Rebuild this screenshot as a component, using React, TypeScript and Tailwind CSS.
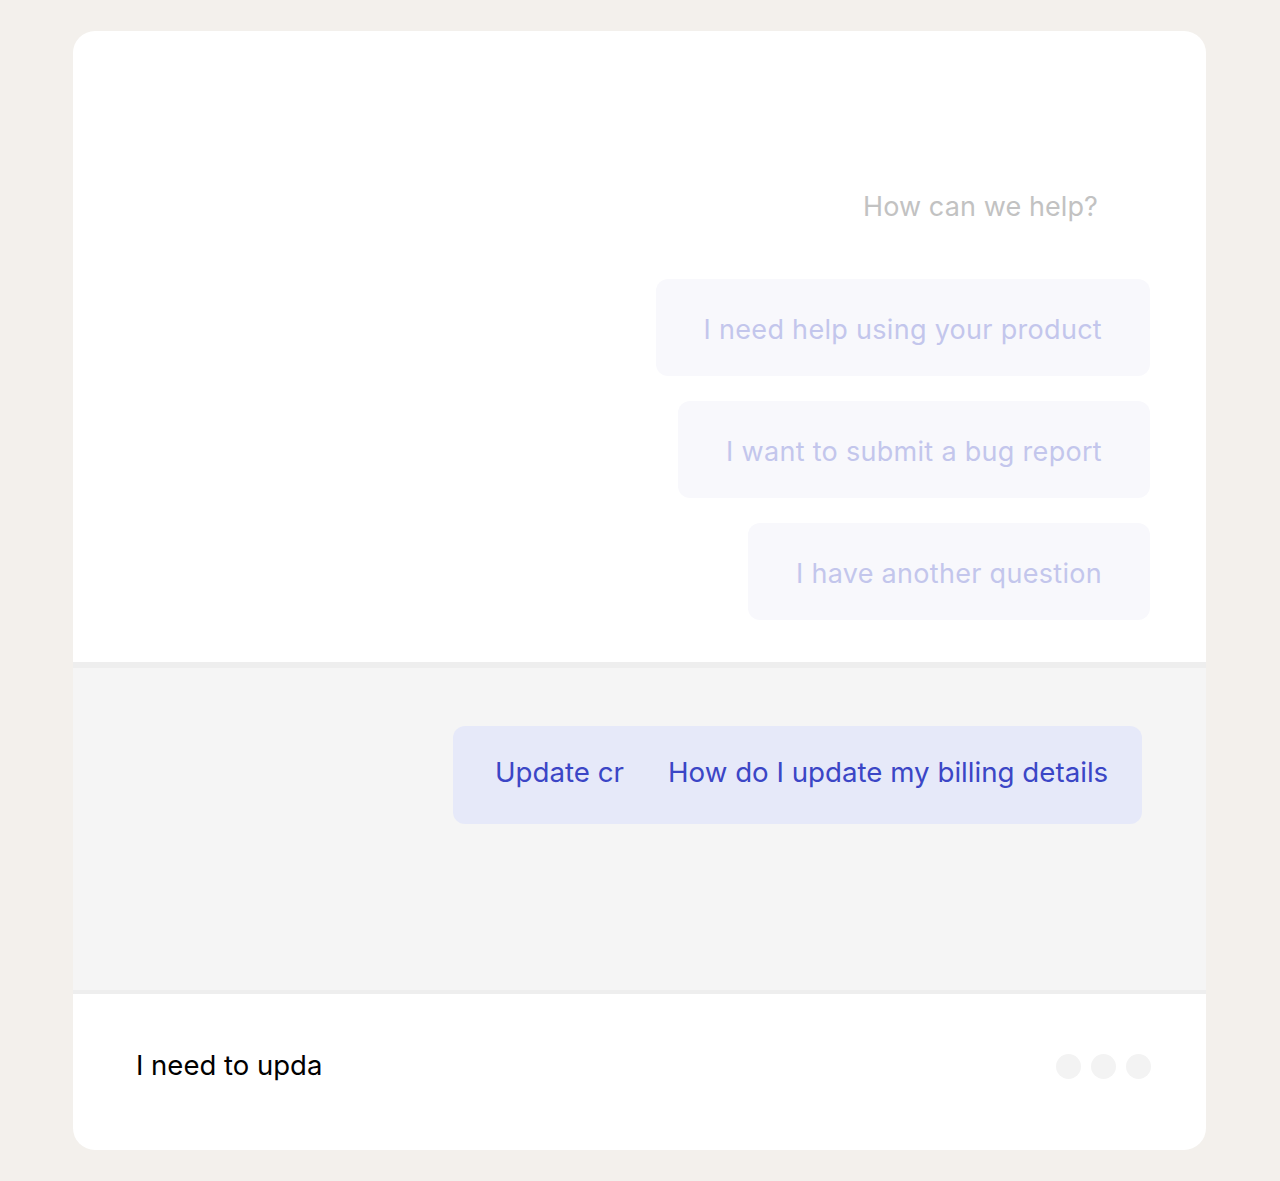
import React from "react";

export default function App() {
  const options = [
    "I need help using your product",
    "I want to submit a bug report",
    "I have another question",
  ];
  return (
    <div className="min-h-[1181px] w-[1280px] bg-[#f3f0ec] pt-[31px] pl-[73px]" style={{ fontFamily: "Inter, 'Noto Sans', sans-serif" }}>
      <div className="w-[1133px] h-[1119px] rounded-[22px] bg-white overflow-hidden flex flex-col">
        <div className="h-[631px] flex flex-col items-end pr-[56px] pt-[159px]">
          <div className="text-[27px] tracking-[0.1px] text-[#c2c2c2] pr-[52px] leading-[34px] mb-[55px]">How can we help?</div>
          <div className="flex flex-col items-end gap-[25px]">
            {options.map((o) => (
              <div key={o} className="h-[97px] flex items-center px-[48px] rounded-[12px] bg-[#f8f8fc] text-[#c3c6ec] text-[27px] tracking-[0.3px] pt-[6px]">
                {o}
              </div>
            ))}
          </div>
        </div>
        <div className="h-[6px] bg-[#eeeeee]" />
        <div className="h-[322px] bg-[#f5f5f5] flex justify-end pr-[64px] pt-[58px] items-start">
          <div className="w-[689px] h-[98px] rounded-[12px] bg-[#e6e9f9] flex items-center pl-[42px] pb-[4px] text-[27.7px] text-[#3b46c6]">
            <span>Update cr</span>
            <span className="ml-[44px]">How do I update my billing details</span>
          </div>
        </div>
        <div className="h-[4px] bg-[#eeeeee]" />
        <div className="flex-1 flex items-center justify-between pl-[63px] pr-[55px] pb-[12px]">
          <div className="text-[27.5px] text-black">I need to upda</div>
          <div className="flex gap-[10px]">
            <div className="w-[25px] h-[25px] rounded-full bg-[#f3f3f3]" />
            <div className="w-[25px] h-[25px] rounded-full bg-[#f3f3f3]" />
            <div className="w-[25px] h-[25px] rounded-full bg-[#f3f3f3]" />
          </div>
        </div>
      </div>
    </div>
  );
}
